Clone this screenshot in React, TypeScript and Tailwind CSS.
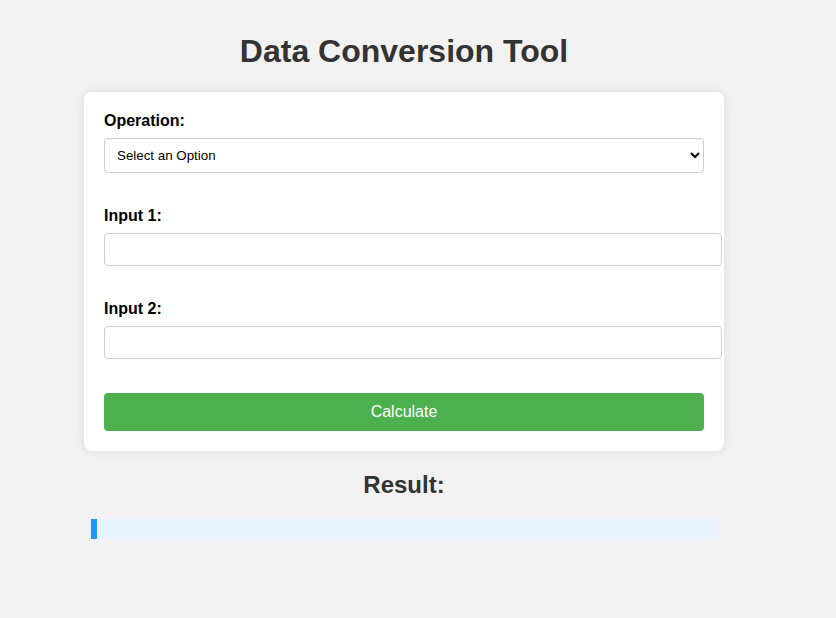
import React from "react";

export default function App() {
  return (
    <div
      className="min-h-screen w-full bg-[#f2f2f2] pt-[33px] pl-[84px]"
      style={{ fontFamily: '"Liberation Sans", Arial, sans-serif' }}
    >
      <div className="w-[640px]">
        <h1 className="text-center text-[32px] font-bold leading-[37px] text-[#333333] mb-[22px]">
          Data Conversion Tool
        </h1>
        <div className="rounded-[8px] bg-white p-[20px] shadow-[0_0_10px_rgba(0,0,0,0.1)]">
          <label className="block text-[16px] font-bold leading-[18px] text-black mb-[8px]">
            Operation:
          </label>
          <select className="block h-[35px] w-[600px] rounded-[4px] border border-[#cccccc] bg-white px-[8px] text-[13.33px] text-black">
            <option>Select an Option</option>
          </select>
          <label className="mt-[34px] block text-[16px] font-bold leading-[18px] text-black mb-[8px]">
            Input 1:
          </label>
          <input
            type="text"
            className="block h-[33px] w-[618px] rounded-[4px] border border-[#cccccc] bg-white px-[8px] text-[13.33px]"
          />
          <label className="mt-[34px] block text-[16px] font-bold leading-[18px] text-black mb-[8px]">
            Input 2:
          </label>
          <input
            type="text"
            className="block h-[33px] w-[618px] rounded-[4px] border border-[#cccccc] bg-white px-[8px] text-[13.33px]"
          />
          <button className="mt-[34px] block h-[38px] w-[600px] rounded-[4px] bg-[#4caf50] text-[16px] text-white">
            Calculate
          </button>
        </div>
        <h2 className="mt-[20px] text-center text-[24px] font-bold leading-[28px] text-[#333333]">
          Result:
        </h2>
        <div className="mx-[7px] mt-[20px] h-[20px] border-l-[6px] border-[#2196f3] bg-[#e7f3fe]" />
      </div>
    </div>
  );
}
